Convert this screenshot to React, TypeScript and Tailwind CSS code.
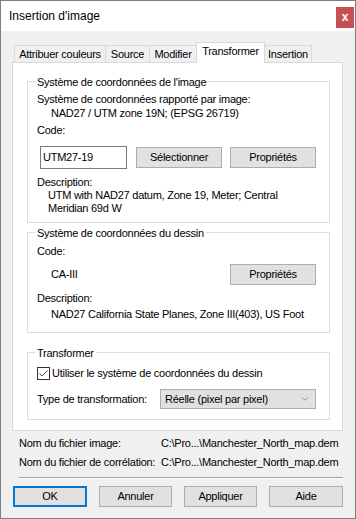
import { ChevronDown } from "lucide-react";

const btn =
  "h-[21px] border border-[#adadad] bg-[#e1e1e1] flex items-center justify-center";

function App() {
  return (
    <div className="w-[356px] h-[519px] border border-[#7f7f7f] bg-[#f0f0f0] flex flex-col text-black font-['Liberation_Sans',Arial,sans-serif] text-[11px] leading-[13px] tracking-[-0.25px]">
      {/* title bar */}
      <div className="h-[30px] shrink-0 bg-white flex items-start justify-between pl-[8px] pr-px">
        <span className="mt-[8px] text-[12px] leading-[15px] tracking-normal">
          Insertion d'image
        </span>
        <div className="mt-[6px] w-[18px] h-[21px] bg-[#c75050] text-white font-bold text-[12px] leading-none tracking-normal flex items-center justify-center pb-[2px]">
          x
        </div>
      </div>

      <div className="flex flex-col pl-[11px] pr-[12px]">
        {/* tabs */}
        <div className="mt-[11px] h-[20px] flex items-end ml-[2px]">
          <div className="w-[92px] h-[17px] border-l border-t border-r border-[#d9d9d9] flex items-center justify-center">
            Attribuer couleurs
          </div>
          <div className="-ml-px w-[45px] h-[17px] border-l border-t border-r border-[#d9d9d9] flex items-center justify-center">
            Source
          </div>
          <div className="-ml-px w-[48px] h-[17px] border-l border-t border-r border-[#d9d9d9] flex items-center justify-center">
            Modifier
          </div>
          <div className="relative z-10 -ml-px -mb-px w-[69px] h-[21px] bg-white border-l border-t border-r border-[#d9d9d9] flex items-center justify-center pb-[3px]">
            Transformer
          </div>
          <div className="-ml-px w-[48px] h-[17px] border-l border-t border-r border-[#d9d9d9] flex items-center justify-center">
            Insertion
          </div>
        </div>

        {/* tab panel */}
        <div className="h-[369px] border border-[#d9d9d9] bg-white flex flex-col pl-[14px] pr-[12px]">
          <fieldset className="mt-[11px] min-w-0 border border-[#dcdcdc] pl-[9px] pr-[13px] pb-[7px]">
            <legend className="-ml-[2px] px-[2px] pt-[2px] leading-[13px]">
              Système de coordonnées de l'image
            </legend>
            <div className="mt-[4px]">Système de coordonnées rapporté par image:</div>
            <div className="mt-px pl-[14px]">NAD27 / UTM zone 19N; (EPSG 26719)</div>
            <div className="mt-[4px]">Code:</div>
            <div className="mt-[9px] h-[23px] flex items-center">
              <div className="ml-[3px] w-[87px] h-[23px] border border-[#7a7a7a] bg-white flex items-center pl-[2px]">
                UTM27-19
              </div>
              <div className={`${btn} ml-[9px] w-[86px]`}>Sélectionner</div>
              <div className={`${btn} ml-[8px] w-[86px]`}>Propriétés</div>
            </div>
            <div className="mt-[7px]">Description:</div>
            <div className="pl-[11px]">
              UTM with NAD27 datum, Zone 19, Meter; Central
              <br />
              Meridian 69d W
            </div>
          </fieldset>

          <fieldset className="mt-[2px] min-w-0 border border-[#dcdcdc] pl-[9px] pr-[13px] pb-[11px]">
            <legend className="-ml-[2px] px-[2px] pt-[2px] leading-[13px]">
              Système de coordonnées du dessin
            </legend>
            <div className="mt-[5px]">Code:</div>
            <div className="mt-[6px] h-[21px] flex items-center justify-between">
              <span className="pl-[14px]">CA-III</span>
              <div className={`${btn} w-[86px]`}>Propriétés</div>
            </div>
            <div className="mt-[7px]">Description:</div>
            <div className="mt-[3px] pl-[14px]">
              NAD27 California State Planes, Zone III(403), US Foot
            </div>
          </fieldset>

          <fieldset className="mt-[12px] min-w-0 border border-[#dcdcdc] pl-[9px] pr-[13px] pb-[10px]">
            <legend className="-ml-[2px] px-[2px] pt-[2px] leading-[13px]">Transformer</legend>
            <div className="mt-[7px] h-[13px] flex items-center gap-[2px]">
              <div className="w-[13px] h-[13px] border border-[#333333] bg-white">
                <svg width="11" height="11" viewBox="0 0 11 11">
                  <path d="M1.5 5.5 L4 8 L9.5 2.5" fill="none" stroke="#4a4a4a" strokeWidth="1" />
                </svg>
              </div>
              <span>Utiliser le système de coordonnées du dessin</span>
            </div>
            <div className="mt-[9px] h-[20px] flex items-center justify-between">
              <span>Type de transformation:</span>
              <div className="w-[156px] h-[20px] border border-[#adadad] bg-[#e1e1e1] flex items-center justify-between pl-[4px] pr-[5px]">
                <span>Réelle (pixel par pixel)</span>
                <ChevronDown size={10} strokeWidth={1.3} color="#505050" />
              </div>
            </div>
          </fieldset>
        </div>

        {/* file names */}
        <div className="ml-[7px] mt-[6px] grid grid-cols-[142px_1fr] gap-y-[5px]">
          <span>Nom du fichier image:</span>
          <span>C:\Pro...\Manchester_North_map.dem</span>
          <span className="pt-px">Nom du fichier de corrélation:</span>
          <span className="pt-px">C:\Pro...\Manchester_North_map.dem</span>
        </div>

        <div className="ml-[7px] mt-[8px] h-[2px] border-t border-[#a0a0a0] border-b border-b-white" />

        {/* dialog buttons */}
        <div className="mt-[7px] ml-px flex justify-between">
          <div className="w-[74px] h-[21px] border-2 border-[#0078d7] bg-[#e1e1e1] flex items-center justify-center">
            OK
          </div>
          <div className={`${btn} w-[73px]`}>Annuler</div>
          <div className={`${btn} w-[73px]`}>Appliquer</div>
          <div className={`${btn} w-[74px]`}>Aide</div>
        </div>
      </div>
    </div>
  );
}

export default App;
